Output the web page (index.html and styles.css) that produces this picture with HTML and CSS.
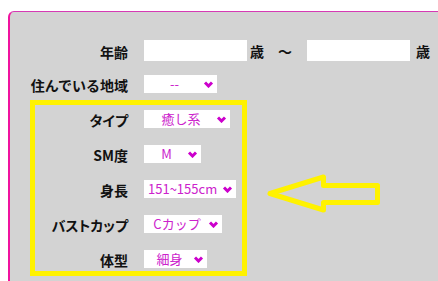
FILE: index.html
```html
<!DOCTYPE html>
<html lang="ja">
<head>
  <meta charset="UTF-8" />
  <meta name="viewport" content="width=device-width, initial-scale=1.0" />
  <title>検索条件</title>
  <link rel="stylesheet" href="styles.css">
</head>
<body>
  <div class="panel">
    <div class="row">
      <label class="label">年齢</label>
      <input type="text" class="age" />
      <span class="unit">歳</span>
      <span class="tilde">〜</span>
      <input type="text" class="age age-to" />
      <span class="unit unit-end">歳</span>
    </div>

    <div class="row row-area">
      <label class="label">住んでいる地域</label>
      <span class="pick w-area">
        <select><option>--</option></select>
        <svg class="chev" viewBox="0 0 10 7"><path d="M1.5 1.5 L5 5 L8.5 1.5" /></svg>
      </span>
    </div>

    <div class="highlight">
      <div class="row">
        <label class="label kana">タイプ</label>
        <span class="pick w-type">
          <select><option>癒し系</option></select>
          <svg class="chev" viewBox="0 0 10 7"><path d="M1.5 1.5 L5 5 L8.5 1.5" /></svg>
        </span>
      </div>
      <div class="row">
        <label class="label">SM度</label>
        <span class="pick w-sm">
          <select><option>M</option></select>
          <svg class="chev" viewBox="0 0 10 7"><path d="M1.5 1.5 L5 5 L8.5 1.5" /></svg>
        </span>
      </div>
      <div class="row">
        <label class="label">身長</label>
        <span class="pick w-height">
          <select class="left"><option>151~155cm</option></select>
          <svg class="chev" viewBox="0 0 10 7"><path d="M1.5 1.5 L5 5 L8.5 1.5" /></svg>
        </span>
      </div>
      <div class="row">
        <label class="label kana">バストカップ</label>
        <span class="pick w-cup">
          <select><option>Cカップ</option></select>
          <svg class="chev" viewBox="0 0 10 7"><path d="M1.5 1.5 L5 5 L8.5 1.5" /></svg>
        </span>
      </div>
      <div class="row">
        <label class="label">体型</label>
        <span class="pick w-body">
          <select><option>細身</option></select>
          <svg class="chev" viewBox="0 0 10 7"><path d="M1.5 1.5 L5 5 L8.5 1.5" /></svg>
        </span>
      </div>
    </div>

    <svg class="arrow" width="125" height="50" viewBox="0 0 125 50">
      <polygon points="10,24.5 63.5,8 63.5,16.5 117.5,16.5 117.5,33.5 63.5,33.5 63.5,41" />
    </svg>
  </div>
</body>
</html>
```

FILE: styles.css
```css
body {
  margin: 0;
  background: #fff;
  overflow: hidden;
  font-family: "Noto Sans CJK JP", "Noto Sans", sans-serif;
  color: #111;
}
.panel {
  position: relative;
  box-sizing: border-box;
  width: 480px;
  height: 300px;
  margin: 11px 0 0 8px;
  padding-top: 28px;
  background: #d3d3d3;
  border-top: 1px solid #d63ab4;
  border-left: 2px solid #f0139f;
  border-top-left-radius: 6px;
}
.row {
  display: flex;
  align-items: center;
  height: 21px;
}
.label {
  box-sizing: border-box;
  width: 118px;
  margin-right: 16px;
  padding-top: 2px;
  text-align: right;
  font-size: 14px;
  font-weight: 700;
  line-height: 18px;
}
.kana {
  font-feature-settings: "palt" 1;
}
.age {
  box-sizing: border-box;
  width: 103px;
  height: 21px;
  border: none;
  background: #fff;
  padding: 0 4px;
}
.unit {
  margin-left: 3px;
  font-size: 14px;
  font-weight: 700;
}
.unit-end {
  margin-left: 6px;
}
.tilde {
  margin-left: 14px;
  font-size: 14px;
  font-weight: 700;
}
.age-to {
  margin-left: 15px;
}
.row-area {
  height: 18px;
  margin-top: 14px;
}
.highlight {
  box-sizing: border-box;
  width: 217px;
  margin: 7px 0 0 20px;
  padding: 5px 0 3px;
  border: 5px solid #fff200;
  display: flex;
  flex-direction: column;
  gap: 17px;
}
.highlight .row {
  height: 18px;
}
.highlight .label {
  width: 93px;
}
.pick {
  position: relative;
  display: block;
  height: 18px;
}
.pick select {
  appearance: none;
  -webkit-appearance: none;
  display: block;
  box-sizing: border-box;
  width: 100%;
  height: 18px;
  margin: 0;
  padding: 0 16px 0 4px;
  border: none;
  border-radius: 0;
  background: #fff;
  color: #cc22cc;
  font-family: "Noto Sans CJK JP", "Noto Sans", sans-serif;
  font-size: 13px;
  line-height: 18px;
  text-align: center;
  text-align-last: center;
}
.pick select.left {
  text-align: left;
  text-align-last: left;
  padding-right: 12px;
}
.chev {
  position: absolute;
  right: 3px;
  top: 6px;
  width: 11px;
  height: 7px;
  pointer-events: none;
}
.chev path {
  fill: none;
  stroke: #cc00cc;
  stroke-width: 3;
}
.w-area { width: 73px; }
.w-type { width: 86px; }
.w-sm { width: 57px; }
.w-height { width: 92px; }
.w-cup { width: 78px; }
.w-body { width: 63px; }
.arrow {
  position: absolute;
  left: 250px;
  top: 157px;
}
.arrow polygon {
  fill: none;
  stroke: #fff200;
  stroke-width: 5;
  stroke-linejoin: round;
}
```
